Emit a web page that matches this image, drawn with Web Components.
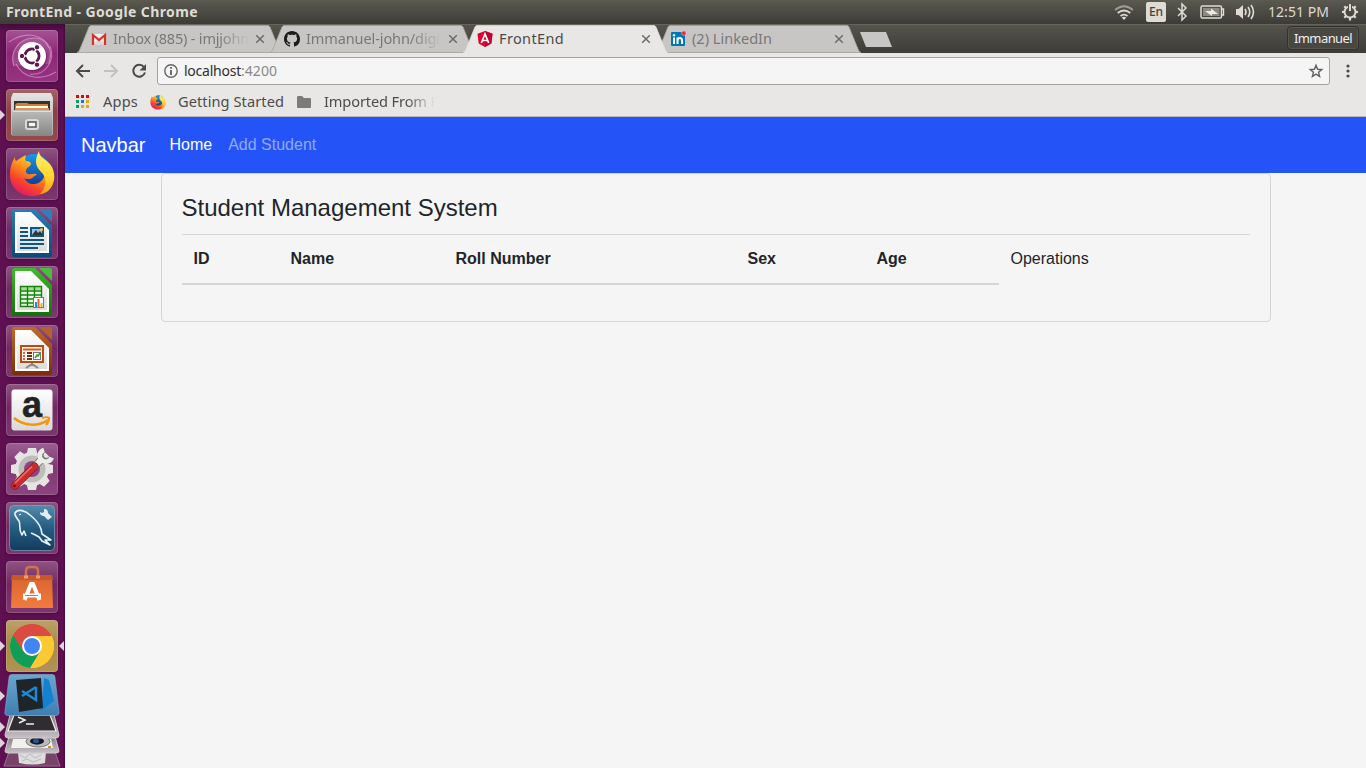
<!DOCTYPE html>
<html lang="en">
<head>
<meta charset="utf-8">
<title>FrontEnd</title>
<style>
html,body{margin:0;height:100%;overflow:hidden;background:#f5f5f5}
body{font-family:"Noto Sans","Open Sans",sans-serif}
</style>
</head>
<body>
<desktop-shell>
  <system-panel slot="panel" heading="FrontEnd - Google Chrome"></system-panel>
  <app-launcher slot="launcher"></app-launcher>
  <browser-window slot="window">
    <browser-tab slot="tabs" icon="gmail" label="Inbox (885) - imjjohn" width="136"></browser-tab>
    <browser-tab slot="tabs" icon="github" label="Immanuel-john/digi" width="134"></browser-tab>
    <browser-tab slot="tabs" icon="angular" label="FrontEnd" width="65" active></browser-tab>
    <browser-tab slot="tabs" icon="linkedin" label="(2) LinkedIn" width="80"></browser-tab>
    <student-app></student-app>
  </browser-window>
</desktop-shell>

<script>
const define = (name, html, setup) => {
  const template = document.createElement('template');
  customElements.define(name, class extends HTMLElement {
    connectedCallback() {
      if (this.shadowRoot) return;
      template.innerHTML = typeof html === 'function' ? html(this) : html;
      this.attachShadow({ mode: 'open' }).append(template.content.cloneNode(true));
      if (setup) setup(this);
    }
  });
};

/* Icons: [width, height, markup] */
const page = (c1, c2, c3, inner) => [52, 52, `
  <defs><linearGradient id="p" x2="0" y2="1"><stop stop-color="${c1}"/><stop offset="1" stop-color="${c2}"/></linearGradient>
  <linearGradient id="q" x2="0" y2="1"><stop stop-color="#fff"/><stop offset="1" stop-color="#dcdcdc"/></linearGradient></defs>
  <path d="M8 2H29L46 19V48a2 2 0 0 1-2 2H8a2 2 0 0 1-2-2V4a2 2 0 0 1 2-2z" fill="url(#p)"/>
  <path d="M33 2H44a2 2 0 0 1 2 2V15z" fill="${c3}"/>
  <path d="M9 5H25L43 23V46H9z" fill="#fff"/><path d="M11 7H25L41 23V44H11z" fill="url(#q)"/>${inner}`];

const ICONS = {
  dash: [52, 52, `<g fill="none" stroke="#e0a5d5" stroke-width="1.200" opacity=".6"><path d="M8 36C3 22 13 8 28 8s19 12 15 26"/><path d="M44 16C50 32 38 46 24 44"/><path d="M3 12C17 2 36 2 43 18M50 42C36 50 18 50 10 34"/></g>
    <path d="M8 36C3 22 13 8 28 8s19 12 15 26z" fill="#fff" opacity=".13"/>
    <circle cx="27" cy="27" r="14.5" fill="#551047" opacity=".35"/><circle cx="26" cy="26" r="14" fill="#fff"/>
    <circle cx="26" cy="26" r="7" fill="none" stroke="#5e1a4e" stroke-width="3"/>
    <g stroke="#fff" stroke-width="1.4"><path d="M26 26H14M26 26L32 15.600M26 26L32 36.400"/></g><circle cx="26" cy="26" r="5.500" fill="#fff"/>
    <g fill="#5e1a4e" stroke="#fff"><circle cx="16" cy="26" r="2.700"/><circle cx="31" cy="17.300" r="2.700"/><circle cx="31" cy="34.700" r="2.700"/></g>`],
  files: [52, 52, `<defs><linearGradient id="a" x2="0" y2="1"><stop stop-color="#bcbcba"/><stop offset="1" stop-color="#868684"/></linearGradient><linearGradient id="b" x2="0" y2="1"><stop stop-color="#e4e4e2"/><stop offset="1" stop-color="#a9a9a7"/></linearGradient></defs>
    <path d="M7 4H45L47 9V46H5V9z" fill="url(#b)"/><path d="M8 12H44V24H8z" fill="#353330"/>
    <path d="M9 16l2-2h10l2 1h19v8H9z" fill="#d97b30"/><path d="M10 17H42v2H10z" fill="#fff"/><path d="M9 19H43v4H9z" fill="#e99242"/>
    <path d="M8 21H44L46 23V47H6V23z" fill="url(#a)"/><path d="M7 22.500H45" stroke="#dededc"/>
    <rect x="19" y="30" width="14" height="11" rx="3" fill="#d9d9d7"/><rect x="22" y="33" width="8" height="5" fill="#f7f7f5" stroke="#555" stroke-width="1.500"/>`],
  firefox: [52, 52, `<defs><linearGradient id="a" x1=".8" y1="0" x2=".2" y2="1"><stop stop-color="#fff04f"/><stop offset=".38" stop-color="#ff9f1b"/><stop offset=".7" stop-color="#f6452c"/><stop offset="1" stop-color="#e2106f"/></linearGradient>
    <linearGradient id="c" x2="0" y2="1"><stop stop-color="#159bea"/><stop offset="1" stop-color="#17378d"/></linearGradient><linearGradient id="d" x2="0" y2="1"><stop stop-color="#fff36b"/><stop offset=".6" stop-color="#ffd52d"/><stop offset="1" stop-color="#ff9b1a"/></linearGradient></defs>
    <circle cx="28" cy="22" r="16" fill="url(#c)"/>
    <path d="M4 27C4 19 6 14 9 9c0 2 0 3 1 4 3-2 6-4 10-6-1 3-1 5 0 6 3 0 5 1 5 3s-4 3-5 6c-1 3 2 5 5 4 3 0 4-1 6 1-3 0-4 4-8 4-2 0-4 0-5-1 3 6 10 8 16 4 7-5 6-14 1-19 8 2 13 12 12 19C45 43 35 48 26 48 13 48 4 39 4 27z" fill="url(#a)"/>
    <path d="M33 3c0 5 4 7 9 11 7 6 8 17 4 24-3 6-9 8-12 8 6-6 7-14 3-20-4-5-11-9-4-23z" fill="url(#d)"/>`],
  writer: page('#2a7fb5', '#0b4a77', '#3080b5', `<g stroke="#0d5487" stroke-width="2"><path d="M14 21h8M14 25h8M14 29h8M14 33h24M14 37h24M14 41h18"/></g><rect x="25" y="21" width="12" height="8" fill="#8ec7ea" stroke="#0d5487" stroke-width="2"/><path d="M26 28l4-5 2 3 2-2 3 4z" fill="#333"/><circle cx="35.500" cy="22.500" r="1.500" fill="#f2c935"/>`),
  calc: page('#43b92f', '#0e7404', '#4bbd3a', `<path d="M14 20h22v21H14z" fill="#e8f9e4"/><path d="M14 20h22v4H14z" fill="#a2df91"/><path d="M14.500 20.500h21v20h-21zM14 25h22M14 29h22M14 33h22M14 37h22M21.500 20v21M28.500 20v21" fill="none" stroke="#17830d" stroke-width="1.400"/><rect x="27.500" y="31.500" width="10" height="10" fill="#fff" stroke="#777"/><path d="M29 36h2v5h-2z" fill="#1991ca"/><path d="M31.500 33h2v8h-2z" fill="#e6642b"/><path d="M34.500 37h2v4h-2z" fill="#e1b719"/>`),
  impress: page('#c46b2b', '#7c2d05', '#b5612d', `<path d="M26 38v3M26 39l-6 4M26 39l6 4" stroke="#888" stroke-width="2"/><rect x="15" y="21" width="22" height="16" fill="#fff7f1" stroke="#b84a14" stroke-width="2"/><path d="M17 24.500h18" stroke="#d65c20" stroke-width="2"/><path d="M17 28h2m-2 3h2m-2 3h2" stroke="#c56e44" stroke-width="2"/><path d="M21 28h5m-5 3h5m-5 3h5" stroke="#74300d" stroke-width="2"/><rect x="27.500" y="27.500" width="7" height="7" fill="#fff" stroke="#777"/><path d="M29 33l2-3 1 1 2-3" fill="none" stroke="#3b9d2d" stroke-width="1.500"/>`),
  amazon: [52, 52, `<defs><linearGradient id="a" x2="0" y2="1"><stop stop-color="#fff"/><stop offset="1" stop-color="#d9d9d9"/></linearGradient></defs><rect x="5.500" y="5.500" width="41" height="41" rx="3" fill="url(#a)"/><text x="26" y="32.500" text-anchor="middle" font-family="Liberation Sans" font-weight="700" font-size="36" fill="#222" stroke="#222" stroke-width=".5">a</text><path d="M8 34c10 8 24 9 34 2" fill="none" stroke="#f79400" stroke-width="2.500"/><path d="M36 34c3-1 6-1 7 0 0 2-1 5-3 7" fill="none" stroke="#f79400" stroke-width="2"/>`],
  settings: [52, 52, `<g transform="translate(26 26)"><g fill="#e4e4e2"><g id="t"><path d="M-4-21h8l2 9H-6zM-4 21h8l2-9H-6z"/></g><use href="#t" transform="rotate(45)"/><use href="#t" transform="rotate(90)"/><use href="#t" transform="rotate(135)"/><circle r="17"/></g><circle r="13.500" fill="#bdbdbb"/><circle r="8" fill="#8d4681"/></g>
    <g fill="none"><path d="M27 25L36 16" stroke="#777" stroke-width="7.500"/><path d="M38 6.500a6 6 0 1 0 8 8" stroke="#777" stroke-width="6"/><path d="M27 25L36 16" stroke="#ececea" stroke-width="6"/><path d="M38 7a6 6 0 1 0 7.500 7.500" stroke="#ececea" stroke-width="4.600"/>
    <path d="M9 42.500L28.500 23.500" stroke="#8d1a1e" stroke-width="8" stroke-linecap="round"/><path d="M9 42.500L28.500 23.500" stroke="#cb2d2d" stroke-width="6.600" stroke-linecap="round"/><path d="M9 40L26 23.500" stroke="#ef716f" stroke-width="1.500"/></g><circle cx="8.500" cy="43" r="1.300" fill="#611"/>`],
  mysql: [52, 52, `<defs><linearGradient id="a" x2="0" y2="1"><stop stop-color="#548cad"/><stop offset=".5" stop-color="#245d82"/><stop offset="1" stop-color="#123c5e"/></linearGradient></defs><rect x="3.500" y="3.500" width="45" height="45" rx="4" fill="url(#a)" stroke="#8ab1c5" stroke-opacity=".6"/>
    <path d="M20 34l-2-5-2 4c-4-6-1-10-3-14-2-3-5-6-4-8 3-5 11-2 15 2 5 4 9 8 11 14l1 5 9 6-6 0 5 5-8-4-3-4c-3-2-5-3-8-4" fill="none" stroke="#e9f3f8" stroke-width="1.600" stroke-linejoin="round"/><path d="M13 13l2-1" stroke="#fff"/><path d="M34 10a3.500 3.500 0 0 0 4 4l4 4 4-3-4-4a3.500 3.500 0 0 0-4-4l0 3-2 1z" fill="#e3ecf0"/>`],
  software: [52, 52, `<defs><linearGradient id="a" x2="0" y2="1"><stop stop-color="#d8642e"/><stop offset="1" stop-color="#f27a3c"/></linearGradient></defs><path d="M6 14H46L47 47H5z" fill="url(#a)"/><path d="M6 14H46l1 5H5z" fill="#c75829"/><path d="M20 17v-7q0-4 4-4h4q4 0 4 4v7" fill="none" stroke="#d2714a" stroke-width="2.500"/><path d="M18 16h4M30 16h4" stroke="#ef9b75" stroke-width="3"/><path d="M18.500 39L25 23h2l6.500 16" fill="none" stroke="#fff" stroke-width="4"/><path d="M17 34.500H35" stroke="#fff" stroke-width="4"/><path d="M19 34.500h13" stroke="#e66b31"/>`],
  chrome: [52, 52, `<circle cx="26" cy="26" r="22" fill="#fcc934"/><path d="M26 26L7 15A22 22 0 0 1 45 15z" fill="#db4437"/><path d="M26 26L7 15A22 22 0 0 0 24 48L35 30z" fill="#109d58"/><path d="M26 16H45.600A22 22 0 0 1 25 48l10-17z" fill="#fcc934"/><path d="M7 15l10 16 9-15h19.500A22 22 0 0 0 7 15z" fill="#db4b42"/><circle cx="26" cy="26" r="10" fill="#fff"/><circle cx="26" cy="26" r="8" fill="#4384f3"/>`],
  stack: [64, 95, `<defs><linearGradient id="a" x2="0" y2="1"><stop stop-color="#6aa6cf"/><stop offset="1" stop-color="#3f7eb2"/></linearGradient><linearGradient id="b" x2="0" y2="1"><stop stop-color="#777078"/><stop offset="1" stop-color="#c6c0c5"/></linearGradient></defs>
    <path d="M10 76H54l6 17H4z" fill="#774368" stroke="#96708c"/><path d="M18 79q14-2 28 0l-1 11q-12 3-26 0z" fill="#dedcdd"/><path d="M20 82l5 3 5-4 5 4 6-3M22 88l5-2 6 3 8-3" stroke="#bcb9bb" fill="none"/>
    <path d="M10 60H54l5 18q0 2-3 2H8q-3 0-3-2z" fill="url(#b)" stroke="#ccc"/><path d="M13 66h38l2 9H11z" fill="#f0f0ee"/><ellipse cx="38" cy="68.500" rx="12" ry="5.500" fill="#bbb" stroke="#777"/><ellipse cx="37" cy="68" rx="7" ry="3.700" fill="#171a26"/><ellipse cx="36" cy="68" rx="3" ry="2" fill="#24579b"/><path d="M48 74h3" stroke="#dc8b2a" stroke-width="2"/>
    <path d="M11 38H53l6 24q0 3-3 3H8q-3 0-3-3z" fill="url(#b)" stroke="#ccc"/><path d="M14 42h36l6 16H8z" fill="#302d32" stroke="#eee" stroke-width="1.200"/><path d="M18 44l7 3-6 3M26 51h8" fill="none" stroke="#eee" stroke-width="1.500"/>
    <path d="M12 1.500H52q3 0 3 3l4 35q0 3-3 3H8q-4 0-3-4L9 4.500q0-3 3-3z" fill="url(#a)" stroke="#80afd0" stroke-width=".6"/><path d="M44 5l5 2 5 21-12 9-7-2 7-4z" fill="#1480d0"/><path d="M16 7l25-2 2 30-24 4z" fill="#1f2429"/><path d="M36 14v13L22 18M36 14L22 23" fill="none" stroke="#2187cf" stroke-width="2.500"/>`],
  wifi: [22, 18, `<g fill="none" stroke="#dfdbd2" stroke-width="1.700"><path d="M2 7q9-7.500 18 0" opacity=".55"/><path d="M4.700 10q6.300-5 12.600 0M7.500 13q3.500-2.700 7 0"/></g><path d="M8.700 14.500q2.300-1.500 4.600 0L11 17z" fill="#dfdbd2"/>`],
  bluetooth: [10, 18, `<path d="M1 5l8 8-4 4V1l4 4-8 8" fill="none" stroke="#dfdbd2" stroke-width="1.500"/>`],
  battery: [25, 14, `<rect x="1" y="1" width="20.500" height="12" rx="1.500" fill="none" stroke="#dfdbd2" stroke-width="1.500"/><rect x="3" y="3" width="16.500" height="8" fill="#8b8982"/><path d="M22 4h1.500v6H22" fill="none" stroke="#dfdbd2" stroke-width="1.400"/><path d="M5 6l6 0V3.500L18 9h-6v2z" fill="#eeeae2"/>`],
  volume: [21, 18, `<path d="M1 6h2.500L8 2v14l-4.500-4H1z" fill="#dfdbd2"/><g fill="none" stroke="#dfdbd2" stroke-width="1.600"><path d="M10 6q2 3 0 6M13 4q3.500 5 0 10"/><path d="M16 2q5 7 0 14"/></g>`],
  gear: [18, 18, `<g stroke="#dfdbd2" fill="none"><circle cx="9" cy="9" r="5.500" stroke-width="2"/><path d="M9 15v2.500M1 9h2.500M14.500 9H17M3.300 3.300L5 5M14.700 3.300L13 5M3.300 14.700L5 13M14.700 14.700L13 13" stroke-width="2.200"/></g><path d="M7 1h4v7H7z" fill="#4d4b44"/><path d="M9 1v7" stroke="#dfdbd2" stroke-width="2"/>`],
  gmail: [14, 11, `<path d="M0 0h14v11H0z" fill="#eee"/><path d="M0 11L7 5l7 6z" fill="#d8d8d8"/><path d="M1 11V1l6 5 6-5v10" fill="none" stroke="#d93025" stroke-width="2.200"/>`],
  github: [16, 16, `<path fill="#1b1b1b" fill-rule="evenodd" d="M8 0C3.580 0 0 3.580 0 8c0 3.540 2.290 6.530 5.470 7.590.4.070.55-.17.55-.38 0-.19-.01-.82-.01-1.490-2.010.37-2.530-.49-2.690-.94-.09-.23-.48-.94-.82-1.130-.28-.15-.68-.52-.01-.53.63-.01 1.080.58 1.230.82.72 1.210 1.870.87 2.330.66.07-.52.28-.87.51-1.070-1.780-.2-3.640-.89-3.640-3.950 0-.87.31-1.590.82-2.150-.08-.2-.36-1.020.08-2.120 0 0 .67-.21 2.200.82.64-.18 1.320-.27 2-.27s1.360.09 2 .27c1.530-1.040 2.200-.82 2.200-.82.44 1.100.16 1.920.08 2.120.51.56.82 1.270.82 2.150 0 3.070-1.870 3.750-3.650 3.950.29.25.54.73.54 1.480 0 1.070-.01 1.930-.01 2.200 0 .21.15.46.55.38A8.010 8.010 0 0 0 16 8c0-4.420-3.580-8-8-8z"/>`],
  angular: [16, 16, `<path d="M8 0l7.500 2.700-1.200 9.800L8 16l-6.300-3.500L.5 2.700z" fill="#dd0031"/><path d="M8 0l7.500 2.700-1.200 9.800L8 16z" fill="#c3002f"/><path d="M4.300 12L8 3l3.700 9M5.700 9.500h4.600" fill="none" stroke="#fff" stroke-width="1.700"/>`],
  linkedin: [16, 16, `<rect y="1" x="1" width="14" height="14" rx="1" fill="#0077b5"/><path d="M4 6.500v6.500M7.500 13V6.500M7.500 10q0-3 2.300-3t2.300 3v3" fill="none" stroke="#fff" stroke-width="2"/><circle cx="4" cy="4.200" r="1.200" fill="#fff"/><circle cx="13.800" cy="2.200" r="2.200" fill="#f5222d" stroke="#c8c6c4" stroke-width=".6"/>`],
  close: [10, 10, `<path d="M1.200 1.200l7.600 7.600M8.800 1.200L1.200 8.800" stroke="#6c6b6a" stroke-width="1.500"/>`],
  back: [16, 14, `<path d="M8 1L2 7l6 6M2 7h13" fill="none" stroke="#4a4a4a" stroke-width="2"/>`],
  forward: [16, 14, `<path d="M8 1l6 6-6 6M14 7H1" fill="none" stroke="#c2c1c0" stroke-width="2"/>`],
  reload: [16, 16, `<path d="M13 4A6 6 0 1 0 14 9.500" fill="none" stroke="#4a4a4a" stroke-width="2"/><path d="M15 1v6.500H8.500z" fill="#4a4a4a"/>`],
  info: [14, 14, `<circle cx="7" cy="7" r="6.200" fill="none" stroke="#666" stroke-width="1.400"/><path d="M7 6v5M7 3v1.800" stroke="#555" stroke-width="1.700"/>`],
  star: [14, 14, `<path d="M7 1.300l1.600 4 4.200.3-3.200 2.700 1 4.200L7 10.200l-3.600 2.300 1-4.200L1.200 5.600l4.200-.3z" fill="none" stroke="#606060" stroke-width="1.400"/>`],
  menu: [4, 14, `<g fill="#4a4a4a"><circle cx="2" cy="2" r="1.600"/><circle cx="2" cy="7" r="1.600"/><circle cx="2" cy="12" r="1.600"/></g>`],
  apps: [13, 13, `<path d="M0 0h3v3H0zM5 0h3v3H5zM10 0h3v3h-3z" fill="#f00000"/><path d="M0 5h3v3H0zM0 10h3v3H0z" fill="#00a25b"/><path d="M5 5h3v3H5z" fill="#1c6fe8"/><path d="M10 5h3v3h-3zM5 10h3v3H5zM10 10h3v3h-3z" fill="#f5a300"/>`],
  folder: [14, 12, `<path d="M1.500 0H5l2 2h6q1 0 1 1v8q0 1-1 1H1q-1 0-1-1V1q0-1 1-1z" fill="#7c7b7a"/>`]
};

define('vector-icon', el => {
  const [w, h, body] = ICONS[el.getAttribute('name')];
  const s = +el.getAttribute('size') || w;
  return `<style>:host{display:block;flex:none;width:${s}px;height:${s * h / w}px}svg{display:block;overflow:visible}</style>
  <svg width="${s}" height="${s * h / w}" viewBox="0 0 ${w} ${h}">${body}</svg>`;
});

/* Single-line label whose tracking is adjusted to span the requested width. */
define('fit-label', `<style>:host{display:block;flex:none;white-space:nowrap;overflow:visible}span{display:inline-block}</style><span><slot></slot></span>`, el => {
  const span = el.shadowRoot.querySelector('span'), want = +el.getAttribute('width');
  const n = el.textContent.length;
  const diff = want - span.getBoundingClientRect().width;
  if (want) { el.style.letterSpacing = diff / n + 'px'; el.style.width = want + 'px'; }
});

define('desktop-shell', `<style>
  :host{display:grid;width:1366px;height:768px;grid-template:24px 744px / 65px 1301px;overflow:hidden}
  ::slotted([slot=panel]){grid-column:1 / 3}</style>
  <slot name="panel"></slot><slot name="launcher"></slot><slot name="window"></slot>`);

define('system-panel', el => `<style>
  :host{display:flex;box-sizing:border-box;align-items:center;height:24px;padding:0 7px 0 6px;background:linear-gradient(#5b5a50,#3c3b37);color:#dfdbd2;font-size:14px;line-height:24px}
  .title{font-weight:700;font-size:14px;flex:1}
  .tray{display:flex;align-items:center}
  .lang{width:20px;height:20px;border-radius:2px;background:#dfdbd2;color:#45433e;font-size:12px;font-weight:500;line-height:20px;text-align:center;margin:0 11px 0 11px}
  .m1{margin-left:13px}.m2{margin-left:10px}.clock{margin:0 12px 0 12px}</style>
  <div class="title"><fit-label width="192">${el.getAttribute('heading')}</fit-label></div>
  <div class="tray"><vector-icon name="wifi"></vector-icon><div class="lang">En</div><vector-icon name="bluetooth"></vector-icon>
  <vector-icon class="m1" name="battery"></vector-icon><vector-icon class="m2" name="volume"></vector-icon>
  <div class="clock"><fit-label width="61">12:51 PM</fit-label></div><vector-icon name="gear"></vector-icon></div>`);

define('launcher-item', el => `<style>
  :host{display:flex;position:relative;width:64px;height:52px;justify-content:center}
  .tile{width:52px;height:52px;border-radius:4px;background:linear-gradient(#ffffff40,#ffffff10 45%,#ffffff20),${el.getAttribute('tint') || '#681b59'};box-shadow:inset 0 0 0 1px #ffffff28,0 1px 3px #2d052866}
  i{position:absolute;top:21px;border:5px solid transparent}
  .l{left:0;border-left-color:#ddd5db;border-right:0}.r{right:0;border-right-color:#ddd5db;border-left:0}</style>
  <div class="tile"><vector-icon name="${el.getAttribute('name')}"></vector-icon></div>
  ${el.hasAttribute('running') ? '<i class="l"></i>' : ''}${el.hasAttribute('focused') ? '<i class="r"></i>' : ''}`);

define('app-launcher', `<style>
  :host{display:flex;flex-direction:column;box-sizing:border-box;width:65px;height:744px;padding-top:6px;gap:7px;overflow:hidden;background:linear-gradient(#2d062780,transparent 8px),linear-gradient(90deg,#5e1051 0 63px,#4a0b3f 64px);}
  .fold{position:relative;margin-top:-6px;height:95px}
  i{position:absolute;left:0;border:5px solid transparent;border-left-color:#ddd5db;border-right:0}</style>
  <launcher-item name="dash" tint="#87186f"></launcher-item>
  <launcher-item name="files" tint="#853036" running></launcher-item>
  <launcher-item name="firefox"></launcher-item>
  <launcher-item name="writer"></launcher-item>
  <launcher-item name="calc"></launcher-item>
  <launcher-item name="impress"></launcher-item>
  <launcher-item name="amazon"></launcher-item>
  <launcher-item name="settings" tint="#7a2a6c"></launcher-item>
  <launcher-item name="mysql"></launcher-item>
  <launcher-item name="software"></launcher-item>
  <launcher-item name="chrome" tint="#a5833b" running focused></launcher-item>
  <div class="fold"><vector-icon name="stack"></vector-icon><i style="top:18px"></i><i style="top:49px"></i><i style="top:65px"></i></div>`);

define('browser-tab', el => {
  const on = el.hasAttribute('active');
  return `<style>
  :host{display:flex;position:relative;z-index:${on ? 5 : 'auto'};isolation:isolate;box-sizing:border-box;align-items:center;width:205px;height:28px;padding:0 17px 0 14px;margin-right:-12px;font-size:14.5px;line-height:27px;color:${on ? '#4c4c4c' : '#797877'}}
  .shape{position:absolute;left:0;top:0;z-index:-1}
  .icon{width:16px;height:16px;display:grid;place-items:center;margin-right:6px}
  .name{width:137px;height:28px;margin-right:5px;${el.getAttribute('width') > 130 ? '-webkit-mask:linear-gradient(90deg,#000 105px,transparent 136px);mask:linear-gradient(90deg,#000 105px,transparent 136px)' : ''}}</style>
  <svg class="shape" width="205" height="28"><path d="M0 28Q2 27 3 24L12 2Q13 .5 14 .5H191Q192 .5 193 2L202 24Q203 27 205 28z" fill="${on ? '#e9e7e5' : '#c8c6c4'}"/>
  <path d="M0 27.500Q2 27 3 24L12 2Q13 .5 14 .5H191Q192 .5 193 2L202 24Q203 27 205 27.500${on ? '' : 'z'}" fill="none" stroke="${on ? '#dedcda' : '#a6a4a1'}" stroke-width=".8"/></svg>
  <div class="icon"><vector-icon name="${el.getAttribute('icon')}"></vector-icon></div>
  <div class="name"><fit-label width="${el.getAttribute('width')}">${el.getAttribute('label')}</fit-label></div>
  <vector-icon name="close"></vector-icon>`;
});

define('browser-window', `<style>
  :host{display:flex;flex-direction:column;width:1301px;height:744px}
  .strip{display:flex;box-sizing:border-box;height:29px;padding:1px 7px 0 12px;background:linear-gradient(#66655b 0 1px,#55544b 1px,#3d3c38)}
  .new{width:32px;height:15px;margin:7px auto 0 11px;background:#c8c6c4;clip-path:polygon(0 0,26px 0,32px 15px,6px 15px)}
  .user{box-sizing:border-box;width:72px;height:24px;margin-top:1px;border:1px solid #32312d;border-radius:4px;background:#484740;color:#eee;font-size:13px;line-height:22px;padding-left:6px;box-shadow:inset 0 0 0 1px #58564e}
  .bar{display:flex;align-items:center;box-sizing:border-box;height:32px;background:#e9e7e5;padding:4px 15px 0 10px;flex:none}
  .bar>vector-icon{margin-right:12px}
  .bar>.rel{margin-right:10px}.bar>.dots{margin:0}
  .omni{display:flex;align-items:center;box-sizing:border-box;width:1173px;height:28px;border:1px solid #a4a2a0;border-radius:3px;background:#f5f5f5;padding:0 6px 0 6px;font-size:14px;line-height:26px;color:#303030;margin-right:16px}
  .url{display:flex;margin:0 auto 0 6px}.port{color:#8a8988}
  .marks{display:flex;align-items:center;box-sizing:border-box;height:32px;background:#e9e7e5;border-bottom:1px solid #bab8b6;padding:2px 0 0 11px;font-size:14.6px;line-height:26px;color:#4c4c4c;flex:none}
  .marks fit-label{height:28px}
  .a{margin:0 11px 0 14px}.b{margin:0 13px 0 11px}.c{margin-left:13px;width:120px;-webkit-mask:linear-gradient(90deg,#000 82px,transparent 111px);mask:linear-gradient(90deg,#000 82px,transparent 111px)}
  </style>
  <div class="strip"><slot name="tabs"></slot><div class="new"></div><div class="user"><fit-label width="58">Immanuel</fit-label></div></div>
  <div class="bar"><vector-icon name="back"></vector-icon><vector-icon name="forward"></vector-icon><vector-icon class="rel" name="reload"></vector-icon>
    <div class="omni"><vector-icon name="info"></vector-icon><div class="url"><fit-label width="57">localhost</fit-label><fit-label class="port" width="36">:4200</fit-label></div><vector-icon name="star"></vector-icon></div>
    <vector-icon class="dots" name="menu"></vector-icon></div>
  <div class="marks"><vector-icon name="apps"></vector-icon><fit-label class="a" width="35">Apps</fit-label><vector-icon name="firefox" size="18"></vector-icon><fit-label class="b" width="106">Getting Started</fit-label><vector-icon name="folder"></vector-icon><div class="c"><fit-label width="114">Imported From F</fit-label></div></div>
  <slot></slot>`);

define('nav-bar', `<style>
  :host{display:flex;align-items:center;box-sizing:border-box;height:56px;padding:8px 16px;background:#2453f7;color:#fff;font-size:16px;line-height:24px}
  .brand{font-size:20px;line-height:30px;margin-right:16px}a{padding:8px}.off{color:#ffffff80}</style>
  <span class="brand">Navbar</span><a>Home</a><a class="off">Add Student</a>`);

define('student-card', `<style>
  :host{display:block;box-sizing:border-box;width:1110px;margin:0 auto;padding:20px;border:1px solid #d5d6d7;border-radius:4px}
  h4{margin:0 0 11.2px;font-weight:400;font-size:24px;line-height:28.8px}</style><h4>Student Management System</h4><slot></slot>`);

define('student-table', `<style>
  :host{display:block;margin-bottom:16px}
  .row{display:grid;grid-template-columns:97px 165px 292px 129px 134px 1fr;border-top:1px solid #d5d8db;line-height:24px}
  b,span{padding:12px}b{border-bottom:2px solid #d3d7db}</style>
  <div class="row"><b>ID</b><b>Name</b><b>Roll Number</b><b>Sex</b><b>Age</b><span>Operations</span></div>`);

define('student-app', `<style>:host{display:block;flex:1;background:#f5f5f5;color:#212529;font:16px/24px "Liberation Sans",Arial,sans-serif}</style>
  <nav-bar></nav-bar><student-card><student-table></student-table></student-card>`);
</script>
</body>
</html>
